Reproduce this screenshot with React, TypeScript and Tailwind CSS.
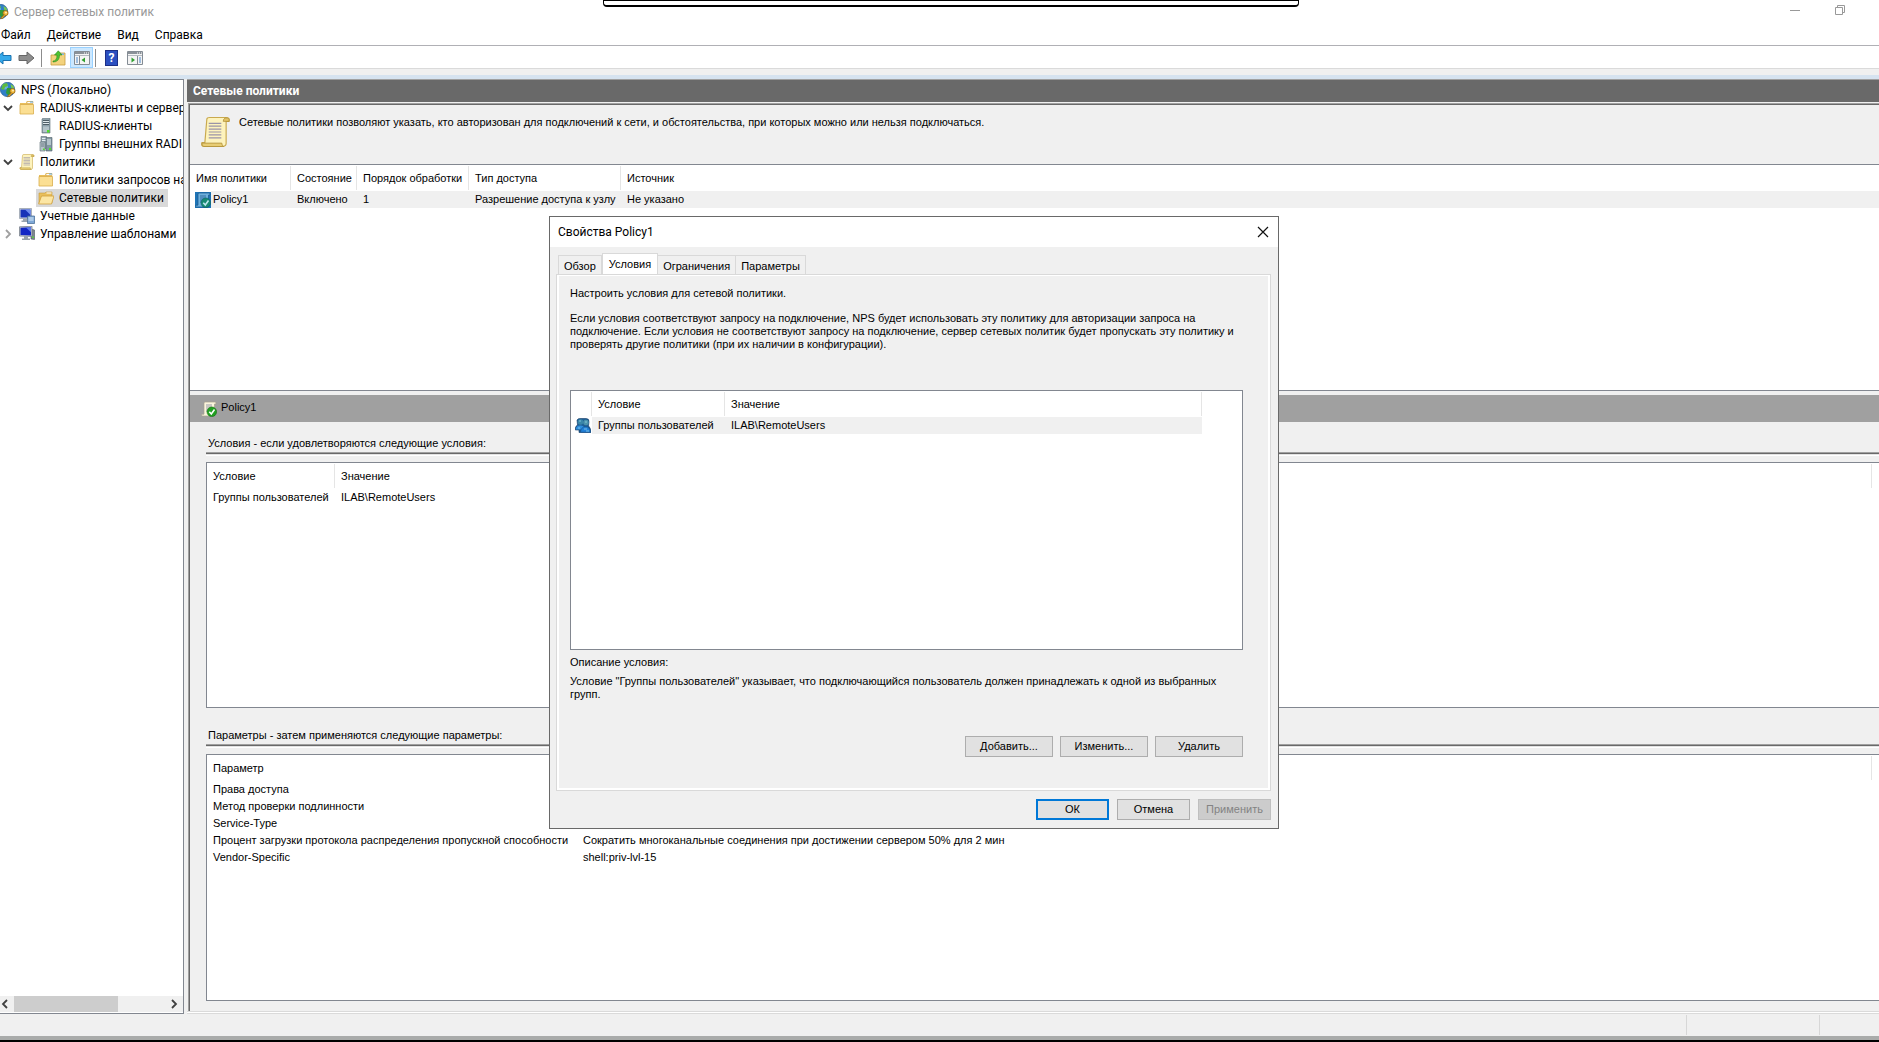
import React from "react";

const ui = "font-['Roboto','Noto_Sans',sans-serif]";

function GlobeIcon() {
  return (
    <svg className="w-4 h-4 shrink-0" viewBox="0 0 16 16">
      <circle cx="7.5" cy="7.5" r="7.2" fill="#2f7fc6" stroke="#1c4f8c" strokeWidth="0.6" />
      <circle cx="5" cy="4.5" r="3" fill="#8fd0f2" opacity="0.6" />
      <path d="M3 2l4-1 1 3-3 1-1 3-3-1z" fill="#5dbb3f" />
      <path d="M7 6l4 0 1 4-3 4-3-3z" fill="#2f9a3a" />
      <path d="M10.5 2l3 2 .8 3-3-1z" fill="#7bc950" />
      <circle cx="12.5" cy="9" r="2.6" fill="#f0b93a" stroke="#8a5a10" strokeWidth="0.7" />
      <circle cx="13" cy="8.6" r="0.9" fill="#fff3c4" />
      <path d="M11.2 10.4l-4 4.2h2.2l3-3.2" fill="#e0a12c" stroke="#8a5a10" strokeWidth="0.6" />
    </svg>
  );
}

function FolderIcon() {
  return (
    <svg className="w-4 h-4 shrink-0" viewBox="0 0 16 16">
      <path d="M1 3h6l1-2h6v13H1z" fill="#e9bf5c" />
      <path d="M8 1.5h6v2H8z" fill="#fff" stroke="#d3a543" strokeWidth="0.6" />
      <path d="M11 1.5h3v1h-3z" fill="#5aa9e6" />
      <path d="M1 4.5h13.5v9.5H1z" fill="#fbdf93" stroke="#d9ad4c" strokeWidth="0.8" />
    </svg>
  );
}

function OpenFolderIcon() {
  return (
    <svg className="w-4 h-4 shrink-0" viewBox="0 0 16 16">
      <path d="M1 3h6l1-1h6v11H1z" fill="#e9bf5c" stroke="#c89b3c" strokeWidth="0.6" />
      <path d="M8.5 2.5h5v1h-5z" fill="#fff" />
      <path d="M3.5 6H16l-2.5 8H.6z" fill="#fce6a4" stroke="#cf9f3c" strokeWidth="0.8" />
    </svg>
  );
}

function ServerIcon() {
  return (
    <svg className="w-4 h-4 shrink-0" viewBox="0 0 16 16">
      <path d="M4 1l1-.8h7V15H4z" fill="#8fa3ad" stroke="#5b6b73" strokeWidth="0.6" />
      <path d="M5 2.500h6M5 4.500h6M5 6.500h6" stroke="#3f4d55" strokeWidth="0.8" />
      <path d="M5 3.500h6M5 5.500h6" stroke="#e6eef2" strokeWidth="0.9" />
      <path d="M5 8.500h6v5.500H5z" fill="#b4c3ca" />
      <rect x="9" y="12" width="2.5" height="2.5" fill="#4fe02a" />
    </svg>
  );
}

function ServersIcon() {
  return (
    <svg className="w-4 h-4 shrink-0" viewBox="0 0 16 16">
      <path d="M3 .5h5.5v12H3z" fill="#94a7b0" stroke="#5b6b73" strokeWidth="0.6" />
      <path d="M8 1.5h6V15H8z" fill="#8298a2" stroke="#4f6068" strokeWidth="0.6" />
      <path d="M4 2.500h3.500M4 4.500h3.500M9 4h4M9 6h4M9 8h4" stroke="#e6eef2" />
      <path d="M2 6h5v9H2z" fill="#b6c4ca" stroke="#5b6b73" strokeWidth="0.6" />
      <path d="M3 8h3M3 10h3" stroke="#5b6b73" strokeWidth="0.8" />
      <rect x="11" y="12" width="2" height="2" fill="#4fe02a" />
      <rect x="5" y="12.5" width="1.6" height="1.6" fill="#4fe02a" />
    </svg>
  );
}

function ScrollIcon({ className = "w-4 h-4" }) {
  return (
    <svg className={`${className} shrink-0`} viewBox="0 0 30 32">
      <path d="M6 3Q6 1 9 1h17q4 0 3 4h-3v23q0 3-4 3H3q-3 0-2-4h3z" fill="#fdf3bd" stroke="#c9a94e" strokeWidth="1.2" />
      <path d="M25 1.5q-2 1-2 3.500h6q1-4-4-3.500z" fill="#e3c467" stroke="#b08f35" strokeWidth="0.8" />
      <path d="M1 27.500h20.500q0 3 2 3.500H3q-2.500-.5-2-3.500z" fill="#e8cd74" stroke="#b08f35" strokeWidth="0.8" />
      <path d="M8 7h13M8 10h13M8 13h13M8 16h13M8 19h13M8 22h13" stroke="#9a94a8" strokeWidth="1.200" />
    </svg>
  );
}

function ScrollCheckIcon({ selected = false }) {
  return (
    <svg className="w-4 h-4 shrink-0" viewBox="0 0 16 16">
      {selected && <path d="M0 0h16v16H0z" fill="#1f74b5" />}
      <path
        d="M3 2q0-1 1.500-1H14q1.500 0 1 2h-1.500v10.500q0 1.500-2 1.500h-10q-1-.2-.8-1.800H3z"
        fill={selected ? "#6fb0dc" : "#fbf5dd"}
        stroke={selected ? "#17588c" : "#a8a08c"}
        strokeWidth="0.7"
      />
      <path d="M5 4h6M5 6h6M5 8h4M5 10h3" stroke={selected ? "#2b679a" : "#8a90a0"} strokeWidth="0.9" />
      <circle cx="10.800" cy="10.800" r="4.800" fill={selected ? "#178a72" : "#22a022"} stroke={selected ? "#0d5f66" : "#127012"} strokeWidth="0.6" />
      <path d="M8.300 10.800l2 2.200 3.200-4.500" fill="none" stroke={selected ? "#bfe6f0" : "#fff"} strokeWidth="1.600" />
    </svg>
  );
}

function AccountingIcon() {
  return (
    <svg className="w-4 h-4 shrink-0" viewBox="0 0 16 16">
      <path d="M.5.5h12v10H.5z" fill="#d5dbe3" stroke="#8b95a3" strokeWidth="0.7" />
      <path d="M1.500 1.500h10v8h-10z" fill="#1733b8" />
      <path d="M6 1.500h5.500V7z" fill="#6f8df0" />
      <path d="M4 11h4v1.500H4zM2.500 12.500h7V14h-7z" fill="#9aa5b1" />
      <path d="M8.500 8h7v7.500h-7z" fill="#7fa8d6" stroke="#3f658f" strokeWidth="0.7" />
      <path d="M9.500 10h5M9.500 12h5" stroke="#dcebf9" />
    </svg>
  );
}

function TemplatesIcon() {
  return (
    <svg className="w-4 h-4 shrink-0" viewBox="0 0 16 16">
      <path d="M12 3l3.500 1v9.500L12 13z" fill="#7d8791" stroke="#4f5860" strokeWidth="0.6" />
      <path d="M.5.8L13 .3v10.200l-12.500-.5z" fill="#c3cad3" stroke="#6b7480" strokeWidth="0.7" />
      <path d="M1.500 1.800l10.500-.5v8.200L1.500 9z" fill="#1226c4" />
      <path d="M7 1.500l5-.2v5z" fill="#5c7bee" />
      <path d="M5 10h4v2.500H5zM3 12.500h8V14H3z" fill="#97a1ab" />
      <rect x="13.200" y="10.500" width="1.500" height="1.500" fill="#4fe02a" />
    </svg>
  );
}

function UsersIcon() {
  return (
    <svg className="w-4 h-4 shrink-0" viewBox="0 0 16 16">
      <path d="M2 2q1-2 4-1.500h5q3.500 0 3 3.500l-.5 4q2 1 2.500 6.500H4V12H.3Q0 8 2.500 7z" fill="#1f5f96" stroke="#123a66" strokeWidth="0.6" />
      <circle cx="5.500" cy="4" r="2.800" fill="#3a86a8" />
      <path d="M.8 11.500q.2-4 4.500-4t4.500 4z" fill="#2f8fdf" />
      <circle cx="11" cy="4.500" r="2.700" fill="#4b93ab" />
      <path d="M5.500 14.200q.5-5.500 5-5.500t5 5.500z" fill="#2280d8" stroke="#154a80" strokeWidth="0.5" />
      <path d="M4 3h2M10 4h2M3 10h2M9 11h3M11 13h3" stroke="#8fd0e8" strokeWidth="0.8" />
    </svg>
  );
}

function Arrow({ fill, stroke, flip = false }: { fill: string; stroke: string; flip?: boolean }) {
  return (
    <svg className="w-[17px] h-[14px]" viewBox="0 0 17 14">
      <path
        d={flip ? "M1 7l7-6v3.500h8v5H8V13z" : "M16 7L9 1v3.500H1v5h8V13z"}
        fill={fill}
        stroke={stroke}
      />
    </svg>
  );
}

function PaneIcon({ right = false }) {
  return (
    <svg className="w-4 h-[14px]" viewBox="0 0 16 14">
      <path d="M.5.5h15v13H.5z" fill="#f4f4f4" stroke="#848c94" />
      <path d="M1 1h14v2H1z" fill="#8a9198" />
      <path d="M10 2h1M12 2h1M14 2h1" stroke="#fff" />
      <path d="M1 4.500h14" stroke="#b4bac0" />
      {right ? (
        <>
          <path d="M10.500 5v8.500" stroke="#848c94" />
          <path d="M12 7h2M12 9h2M12 11h2" stroke="#4a86c8" />
          <path d="M4.500 6.500v5L8 9z" fill="#2fa02f" />
        </>
      ) : (
        <>
          <path d="M5.500 5v8.500" stroke="#848c94" />
          <path d="M2 7h2M2 9h2M2 11h2" stroke="#4a86c8" />
          <path d="M11 6.500v5L7.500 9z" fill="#2fa02f" />
        </>
      )}
    </svg>
  );
}

function Chevron({ d, color = "#404040" }: { d: string; color?: string }) {
  return (
    <svg className="w-[10px] h-[10px] shrink-0" viewBox="0 0 10 10">
      <path d={d} fill="none" stroke={color} strokeWidth="1.800" />
    </svg>
  );
}

const down = "M1 3l4 4 4-4";
const right = "M3 1l4 4-4 4";
const left = "M7 1L3 5l4 4";

const tree = [
  { text: "RADIUS-клиенты и сервер", icon: <FolderIcon />, open: true },
  { text: "RADIUS-клиенты", icon: <ServerIcon />, nested: true },
  { text: "Группы внешних RADI", icon: <ServersIcon />, nested: true },
  { text: "Политики", icon: <ScrollIcon />, open: true },
  { text: "Политики запросов на", icon: <FolderIcon />, nested: true },
  { text: "Сетевые политики", icon: <OpenFolderIcon />, nested: true, selected: true },
  { text: "Учетные данные", icon: <AccountingIcon /> },
  { text: "Управление шаблонами", icon: <TemplatesIcon />, closed: true },
];

function Tree() {
  return (
    <nav className={`${ui} w-[184px] shrink-0 flex flex-col bg-white border-t border-r border-b border-[#828790] overflow-hidden text-xs`}>
      <ul className="flex-1 pt-px leading-[18px] whitespace-nowrap">
        <li className="flex items-center gap-[5px] h-[18px]">
          <GlobeIcon />
          NPS (Локально)
        </li>
        {tree.map((item) => (
          <li key={item.text} className={`flex items-center h-[18px] ${item.nested ? "pl-9" : "pl-[3px]"}`}>
            {!item.nested && (
              <span className="w-4 shrink-0">
                {item.open && <Chevron d={down} />}
                {item.closed && <Chevron d={right} color="#a0a0a0" />}
              </span>
            )}
            <span className={`flex items-center gap-[5px] pl-0.5 pr-1 ${item.nested ? "" : "-ml-0.5"} ${item.selected ? "bg-[#d9d9d9]" : ""}`}>
              {item.icon}
              {item.text}
            </span>
          </li>
        ))}
      </ul>
      <div className="flex items-center h-4 mb-px bg-[#f0f0f0]">
        <Chevron d={left} />
        <div className="ml-1 h-full w-[104px] bg-[#cdcdcd]"></div>
        <span className="ml-auto mr-1 flex">
          <Chevron d={right} />
        </span>
      </div>
    </nav>
  );
}

function SectionTitle({ children }: { children: React.ReactNode }) {
  return (
    <h3 className="h-[18px] pl-0.5 leading-4 border-b border-[#a0a0a0] shadow-[0_1px_#696969,0_2px_#e3e3e3,0_3px_#fff]">
      {children}
    </h3>
  );
}

const params = [
  ["Права доступа", "Предоставить доступ"],
  ["Метод проверки подлинности", "Проверка открытым текстом (PAP, SPAP)"],
  ["Service-Type", "Login"],
  ["Процент загрузки протокола распределения пропускной способности", "Сократить многоканальные соединения при достижении сервером 50% для 2 мин"],
  ["Vendor-Specific", "shell:priv-lvl-15"],
];

function Th({ children, className = "" }: { children?: React.ReactNode; className?: string }) {
  return (
    <th className={`p-0 h-[26px] font-normal text-left whitespace-nowrap ${className}`}>
      <div className="h-6 pl-1.5 leading-6 border-r border-[#e5e5e5]">{children}</div>
    </th>
  );
}

function Details() {
  return (
    <section className="flex-1 flex flex-col">
      <div className="flex items-center gap-1 h-[27px] mt-1 pl-[11px] bg-[#a0a0a0]">
        <ScrollCheckIcon />
        <h2 className="pb-0.5">Policy1</h2>
      </div>

      <div className="flex-1 flex flex-col pl-4 pt-[13px] pb-[10px]">
        <SectionTitle>Условия - если удовлетворяются следующие условия:</SectionTitle>
        <div className="mt-[9px] h-[246px] bg-white border border-r-0 border-[#828790]">
          <table className="w-full table-fixed">
            <thead>
              <tr>
                <Th className="w-32">Условие</Th>
                <Th>Значение</Th>
                <th className="w-[7px]"></th>
              </tr>
            </thead>
            <tbody className="leading-[17px] whitespace-nowrap">
              <tr>
                <td className="pl-1.5">Группы пользователей</td>
                <td className="pl-1.5">ILAB\RemoteUsers</td>
                <td></td>
              </tr>
            </tbody>
          </table>
        </div>

        <div className="pt-[19px]">
          <SectionTitle>Параметры - затем применяются следующие параметры:</SectionTitle>
        </div>
        <div className="mt-[9px] flex-1 bg-white border border-r-0 border-[#828790]">
          <table className="w-full table-fixed">
            <thead>
              <tr>
                <Th className="w-[370px]">Параметр</Th>
                <Th>Значение</Th>
                <th className="w-[7px]"></th>
              </tr>
            </thead>
            <tbody className="leading-[17px] whitespace-nowrap">
              {params.map(([name, value]) => (
                <tr key={name}>
                  <td className="pl-1.5">{name}</td>
                  <td className="pl-1.5">{value}</td>
                  <td></td>
                </tr>
              ))}
            </tbody>
          </table>
        </div>
      </div>
    </section>
  );
}

function Policies() {
  return (
    <main className="flex-1 min-w-0 ml-[3px] flex flex-col border-t border-[#a0a0a0] text-[11px]">
      <h1 className={`${ui} h-[22px] pl-[6px] bg-[#696969] text-white text-xs font-bold leading-[22px]`}>
        Сетевые политики
      </h1>
      <div className="flex-1 flex flex-col mt-px ml-px border-t border-l border-[#a0a0a0]">
        <div className="flex-1 flex flex-col border-t border-l border-[#696969]">
          <div className="flex gap-[9px] h-[59px] pl-[11px] pt-[11px]">
            <ScrollIcon className="w-[29px] h-8" />
            <p className="leading-4 -mt-0.5">
              Сетевые политики позволяют указать, кто авторизован для подключений к сети, и обстоятельства, при которых можно или нельзя подключаться.
            </p>
          </div>
          <div className="h-[227px] bg-white border-t border-b border-[#828790]">
            <table className="w-full table-fixed">
              <thead>
                <tr>
                  <Th className="w-[101px]">Имя политики</Th>
                  <Th className="w-[66px]">Состояние</Th>
                  <Th className="w-28">Порядок обработки</Th>
                  <Th className="w-[152px]">Тип доступа</Th>
                  <Th className="[&>div]:border-r-0">Источник</Th>
                </tr>
              </thead>
              <tbody className="leading-[17px] whitespace-nowrap">
                <tr className="bg-[#f0f0f0]">
                  <td className="bg-white pl-[5px]">
                    <span className="flex items-center">
                      <ScrollCheckIcon selected />
                      <span className="flex-1 pl-0.5 bg-[#f0f0f0]">Policy1</span>
                    </span>
                  </td>
                  <td className="pl-1.5">Включено</td>
                  <td className="pl-1.5">1</td>
                  <td className="pl-1.5">Разрешение доступа к узлу</td>
                  <td className="pl-1.5">Не указано</td>
                </tr>
              </tbody>
            </table>
          </div>
          <Details />
        </div>
      </div>
      <div className="h-[3px] bg-white border-t border-b border-[#dadada]"></div>
    </main>
  );
}

const btn = "h-[21px] bg-[#e1e1e1] border border-[#adadad] leading-[17px]";

function PolicyDialog({ onClose }: { onClose: () => void }) {
  const [tab, setTab] = React.useState("Условия");
  return (
    <div
      role="dialog"
      aria-label="Свойства Policy1"
      className="absolute left-[549px] top-[216px] w-[730px] bg-[#f0f0f0] border border-[#696969] text-[11px]"
    >
      <div className={`${ui} flex items-center justify-between h-[30px] pl-2 pr-[9px] bg-white text-xs`}>
        <h2>Свойства Policy1</h2>
        <button aria-label="Закрыть" onClick={onClose}>
          <svg className="w-3 h-3" viewBox="0 0 12 12">
            <path d="M1 1l10 10M11 1L1 11" stroke="#111" strokeWidth="1.200" />
          </svg>
        </button>
      </div>

      <div className="flex items-end h-[27px] pl-2">
        {["Обзор", "Условия", "Ограничения", "Параметры"].map((name) => (
          <button
            key={name}
            onClick={() => setTab(name)}
            className={`border border-b-0 border-[#d9d9d9] ${
              tab === name ? "h-[21px] bg-white px-1.5" : "h-[19px] px-[5px] pt-0.5 border-l-0 first:border-l"
            }`}
          >
            {name}
          </button>
        ))}
      </div>

      <div className="ml-[6px] mr-[7px] border border-[#d9d9d9]">
        <div className="border-2 border-t border-white h-[515px] pl-[11px] pr-[25px] pt-2">
          <p className="leading-[18px]">Настроить условия для сетевой политики.</p>
          <p className="mt-[10px] leading-[13px] whitespace-nowrap">
            Если условия соответствуют запросу на подключение, NPS будет использовать эту политику для авторизации запроса на
            <br />
            подключение. Если условия не соответствуют запросу на подключение, сервер сетевых политик будет пропускать эту политику и
            <br />
            проверять другие политики (при их наличии в конфигурации).
          </p>

          <div className="mt-[39px] h-[260px] bg-white border border-[#828790] pr-10">
            <table className="w-full table-fixed">
              <thead>
                <tr>
                  <Th className="w-[21px]" />
                  <Th className="w-[133px]">Условие</Th>
                  <Th>Значение</Th>
                </tr>
              </thead>
              <tbody className="leading-[17px] whitespace-nowrap">
                <tr>
                  <td className="pl-1">
                    <UsersIcon />
                  </td>
                  <td className="pl-1.5 bg-[#f0f0f0]">Группы пользователей</td>
                  <td className="pl-1.5 bg-[#f0f0f0]">ILAB\RemoteUsers</td>
                </tr>
              </tbody>
            </table>
          </div>

          <h3 className="mt-1 leading-4">Описание условия:</h3>
          <p className="mt-[5px] leading-[13px] whitespace-nowrap">
            Условие "Группы пользователей" указывает, что подключающийся пользователь должен принадлежать к одной из выбранных
            <br />
            групп.
          </p>
          <div className="flex justify-end gap-[7px] mt-[35px]">
            <button className={`${btn} w-[88px]`}>Добавить...</button>
            <button className={`${btn} w-[88px]`}>Изменить...</button>
            <button className={`${btn} w-[88px]`}>Удалить</button>
          </div>
        </div>
      </div>

      <div className="flex justify-end gap-2 pt-2 pb-2 pr-[7px]">
        <button onClick={onClose} className="h-[21px] w-[73px] bg-[#e1e1e1] border-2 border-[#0078d7] leading-[15px]">
          ОК
        </button>
        <button onClick={onClose} className={`${btn} w-[73px]`}>Отмена</button>
        <button disabled className="h-[21px] w-[73px] bg-[#cccccc] border border-[#bfbfbf] text-[#838383] leading-[17px]">
          Применить
        </button>
      </div>
    </div>
  );
}

export default function App() {
  const [showDialog, setShowDialog] = React.useState(true);
  return (
    <div className="relative min-h-screen flex flex-col bg-[#f0f0f0] text-black font-['Liberation_Sans',Arial,sans-serif] overflow-hidden">
      <header className={`${ui} bg-white text-xs`}>
        <div className="flex items-center h-6 text-[#999999]">
          <span className="-ml-[7px]">
            <GlobeIcon />
          </span>
          <span className="ml-[5px]">Сервер сетевых политик</span>
          <div className="ml-auto flex gap-[35px] pr-[34px] pb-1">
            <button aria-label="Свернуть">
              <svg className="w-[10px] h-[10px]" viewBox="0 0 10 10">
                <path d="M0 5.500h10" stroke="#999" />
              </svg>
            </button>
            <button aria-label="Восстановить">
              <svg className="w-[10px] h-[10px]" viewBox="0 0 10 10">
                <path d="M.5 2.500h7v7h-7zM2.500 2.500v-2h7v7h-2" fill="none" stroke="#999" />
              </svg>
            </button>
          </div>
        </div>
        <div className="flex gap-4 h-[22px] pl-px leading-5 border-b border-[#b0b0b5]">
          <button>Файл</button>
          <button>Действие</button>
          <button>Вид</button>
          <button>Справка</button>
        </div>
        <div className="flex items-center h-[23px] pt-px border-b border-[#dadada]">
          <button aria-label="Назад" className="-ml-[5px]">
            <Arrow fill="#35a9ea" stroke="#1972b0" flip />
          </button>
          <button aria-label="Вперед" className="ml-[6px]">
            <Arrow fill="#8e8e8e" stroke="#666" />
          </button>
          <span className="ml-[6px] w-px h-[18px] bg-[#8c8c8c]"></span>
          <button aria-label="Вверх" className="ml-2">
            <svg className="w-4 h-4" viewBox="0 0 16 16">
              <path d="M1 5h7l1-2h6v12H1z" fill="#f3d27d" stroke="#c69c40" strokeWidth="0.8" />
              <path d="M10 3.500h4v1.500h-4z" fill="#7db7e8" />
              <path d="M3 11q4 0 4-6H4.500L8.300.8 12 5H9.500q0 7-6.500 7z" fill="#4fc332" stroke="#2b8a1c" strokeWidth="0.6" />
            </svg>
          </button>
          <button aria-label="Дерево консоли" className="ml-1 w-[23px] h-[21px] flex items-center justify-center bg-[#cce8ff] border border-[#99d1ff]">
            <PaneIcon />
          </button>
          <span className="ml-[2px] w-px h-[18px] bg-[#8c8c8c]"></span>
          <button aria-label="Справка" className="ml-[9px] w-[13px] h-4 bg-[#2b4fc0] border border-[#1c2f86] text-white font-bold leading-[14px]">
            ?
          </button>
          <button aria-label="Область действий" className="ml-[9px]">
            <PaneIcon right />
          </button>
        </div>
      </header>

      <div className="h-[10px] border-b-4 border-[#d6e3f0]"></div>

      <div className="flex-1 flex bg-[#f0f0f0]">
        <Tree />
        <Policies />
      </div>

      <footer className="flex justify-end h-[22px]">
        <div className="w-[133px] h-5 mt-px border-l border-[#d7d7d7]"></div>
        <div className="w-[60px] h-5 mt-px border-l border-[#d7d7d7]"></div>
      </footer>
      <div className="h-[6px] bg-[#a9abaa] border-b-2 border-black"></div>

      {/* collapsed session bar */}
      <div className="absolute top-0 left-[603px] w-[696px] h-[7px] bg-white border border-b-2 border-black rounded-b-sm"></div>

      {showDialog && <PolicyDialog onClose={() => setShowDialog(false)} />}
    </div>
  );
}
